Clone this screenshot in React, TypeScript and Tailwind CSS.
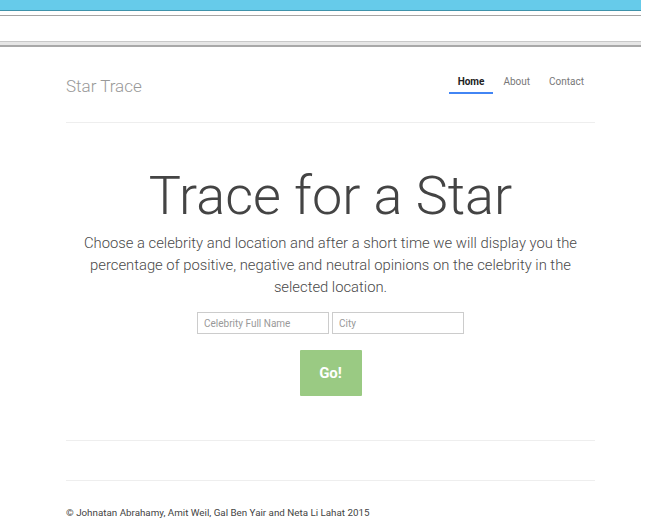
const App = () => {
  return (
    <div className="min-h-[530px] bg-white font-['Roboto',sans-serif]">
      {/* browser chrome strips */}
      <div className="w-[641px]">
        <div className="h-[10px] bg-[#66cbea]" />
        <div className="h-[1px] bg-[#3f92aa]" />
        <div className="h-[4px] bg-white" />
        <div className="h-[1px] bg-[#a4a4a4]" />
        <div className="h-[25px] bg-white" />
        <div className="h-[6px] border-t border-b-2 border-t-[#c8c8c8] border-b-[#a8a8a8] bg-[#e6e6e6]" />
      </div>

      <div className="ml-[66px] w-[529px]">
        <div className="flex h-[76px] items-start justify-between border-b border-[#eeeeee]">
          <div className="mt-[28px] text-[17px] leading-[22px] font-light text-[#999999]">
            Star Trace
          </div>
          <nav className="mt-[25px] mr-[2px] flex gap-[1px] text-[10px] leading-[20px]">
            <a className="border-b-2 border-[#4285f4] px-[9px] font-bold text-[#222222]">
              Home
            </a>
            <a className="px-[9px] text-[#777777]">About</a>
            <a className="px-[9px] text-[#777777]">Contact</a>
          </nav>
        </div>

        <div className="flex flex-col items-center">
          <h1 className="mt-[44px] text-[54px] leading-[58px] font-light text-[#444444]">
            Trace for a Star
          </h1>
          <p className="mt-[7px] w-[510px] text-center text-[14.8px] leading-[22px] font-light text-[#4a4a4a]">
            Choose a celebrity and location and after a short time we will
            display you the percentage of positive, negative and neutral
            opinions on the celebrity in the selected location.
          </p>
          <div className="mt-[14px] flex gap-[3px]">
            <input
              placeholder="Celebrity Full Name"
              className="h-[22px] w-[132px] border border-[#cccccc] px-[6px] text-[10px] text-[#555555] outline-none placeholder:text-[#999999]"
            />
            <input
              placeholder="City"
              className="h-[22px] w-[132px] border border-[#cccccc] px-[6px] text-[10px] text-[#555555] outline-none placeholder:text-[#999999]"
            />
          </div>
          <button className="mt-[16px] h-[46px] w-[62px] rounded-[1px] bg-[#9aca83] text-[15px] font-bold text-white">
            Go!
          </button>
        </div>

        <div className="mt-[44px] border-t border-[#eeeeee]" />
        <div className="mt-[39px] border-t border-[#eeeeee]" />
        <div className="mt-[25px] text-[9.8px] leading-[14px] text-[#444444]">
          © Johnatan Abrahamy, Amit Weil, Gal Ben Yair and Neta Li Lahat 2015
        </div>
      </div>
    </div>
  );
};

export default App;
